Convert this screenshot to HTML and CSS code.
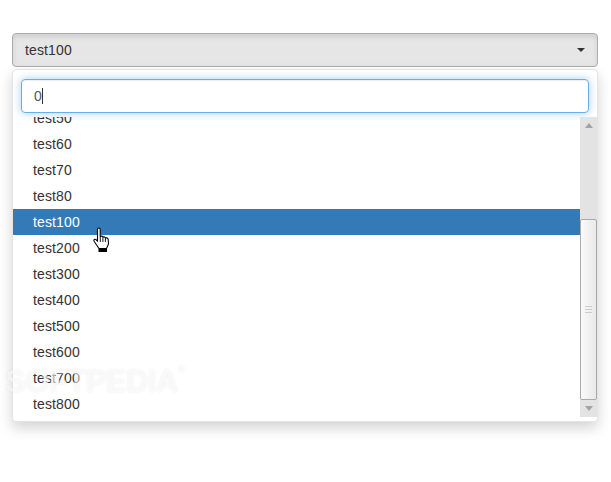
FILE: index.html
```html
<!DOCTYPE html>
<html>
<head>
	<meta charset="UTF-8"/>
	<title>select</title>
	<link rel="stylesheet" href="styles.css">
</head>
<body>

<div class="picker">
	<button class="toggle">
		<span>test100</span>
		<span class="caret"></span>
	</button>
	<div class="menu">
		<div class="searchbox">
			<div class="search"><span class="typed">0</span><span class="blink"></span></div>
		</div>
		<div class="listwrap">
			<ul class="list">
				<li>test50</li>
				<li>test60</li>
				<li>test70</li>
				<li>test80</li>
				<li class="on">test100</li>
				<li>test200</li>
				<li>test300</li>
				<li>test400</li>
				<li>test500</li>
				<li>test600</li>
				<li>test700</li>
				<li>test800</li>
			</ul>
			<div class="scroll">
				<div class="arrow"><span class="up"></span></div>
				<div class="track">
					<div class="thumb"><span class="grip"></span></div>
				</div>
				<div class="arrow"><span class="down"></span></div>
			</div>
		</div>
	</div>
</div>

<svg class="hand" width="18" height="26" viewBox="0 0 18 26">
	<path d="M4.500 11V2.500C4.500 1.500 5 1 5.800 1S7.200 1.500 7.200 2.500V9.500C8.500 8.800 9.600 9 9.900 10.200C11 9.600 12.200 9.900 12.400 11C13.600 10.600 15 11 15.200 12.500L15.500 17L13.500 21.500H6L1.200 14.500C.5 13.400 1 12.300 2 12.300C3 12.300 3.800 13.300 4.500 14.300Z" fill="#fff" stroke="#000" stroke-width="1.100" stroke-linejoin="round"/>
	<rect x="5.500" y="21.500" width="8.500" height="3.500" fill="#000"/>
	<path d="M7.300 10v5M9.900 10.500v4.500M12.400 11v4" stroke="#000" stroke-width=".9"/>
</svg>
<div class="mark">SOFTPEDIA<sup>®</sup></div>

</body>
</html>
```

FILE: styles.css
```css
*{
	box-sizing:border-box;
	border:0;
	padding:0;
	margin:0;
}
body{
	min-height:100vh;
	padding:33px 0 0 12px;
	background-color:#fff;
	font-family:"Liberation Sans",Arial,sans-serif;
	font-size:14px;
	letter-spacing:.13px;
	color:#333;
}
.picker{
	width:586px;
}
.toggle{
	display:flex;
	justify-content:space-between;
	align-items:center;
	width:100%;
	height:34px;
	padding:0 12px;
	background:#e6e6e6;
	border:1px solid #adadad;
	border-radius:4px;
	box-shadow:inset 0 3px 5px rgba(0,0,0,.1);
	font:14px "Liberation Sans",Arial,sans-serif;
	letter-spacing:.13px;
	color:#333;
}
.caret{
	width:0;
	height:0;
	border-top:4px solid #333;
	border-left:4px solid transparent;
	border-right:4px solid transparent;
}
.menu{
	margin-top:2px;
	height:353px;
	background:#fff;
	border:1px solid #e4e4e4;
	border-radius:4px;
	box-shadow:0 6px 14px rgba(0,0,0,.175);
}
.searchbox{
	padding:9px 8px 4px;
}
.search{
	display:flex;
	align-items:center;
	height:34px;
	padding:0 12px;
	border:1px solid #66afe9;
	border-radius:4px;
	box-shadow:inset 0 1px 1px rgba(0,0,0,.075),0 0 8px rgba(102,175,233,.6);
	color:#555;
}
.blink{
	width:1px;
	height:16px;
	background:#333;
}
.listwrap{
	display:flex;
	height:300px;
	overflow:hidden;
}
.list{
	flex:1;
	list-style:none;
	margin-top:-12px;
}
.list li{
	height:26px;
	line-height:26px;
	padding-left:20px;
}
.list .on{
	background:#337ab7;
	color:#fff;
}
.scroll{
	display:flex;
	flex-direction:column;
	width:17px;
	background:#e3e3e3;
}
.arrow{
	display:flex;
	justify-content:center;
	align-items:center;
	height:17px;
}
.up{
	border-bottom:5px solid #a3a3a3;
	border-left:4px solid transparent;
	border-right:4px solid transparent;
}
.down{
	border-top:5px solid #a3a3a3;
	border-left:4px solid transparent;
	border-right:4px solid transparent;
}
.track{
	flex:1;
	display:flex;
	flex-direction:column;
	justify-content:flex-end;
}
.thumb{
	display:flex;
	justify-content:center;
	align-items:center;
	height:181px;
	background:linear-gradient(to right,#fafafa,#e9e9e9);
	border:1px solid #a9a9a9;
	border-radius:2px;
}
.grip{
	width:7px;
	height:7px;
	border-top:1px solid #ccc;
	border-bottom:1px solid #ccc;
	background:linear-gradient(#ccc,#ccc) center/100% 1px no-repeat;
}
.hand{
	position:absolute;
	left:93px;
	top:227px;
}
.mark{
	position:absolute;
	left:5px;
	top:364px;
	font-size:31px;
	font-weight:bold;
	color:rgba(255,255,255,.6);
	text-shadow:0 0 3px rgba(0,0,0,.07);
	letter-spacing:-.5px;
	white-space:nowrap;
}
.mark sup{
	font-size:10px;
	vertical-align:top;
}
```
